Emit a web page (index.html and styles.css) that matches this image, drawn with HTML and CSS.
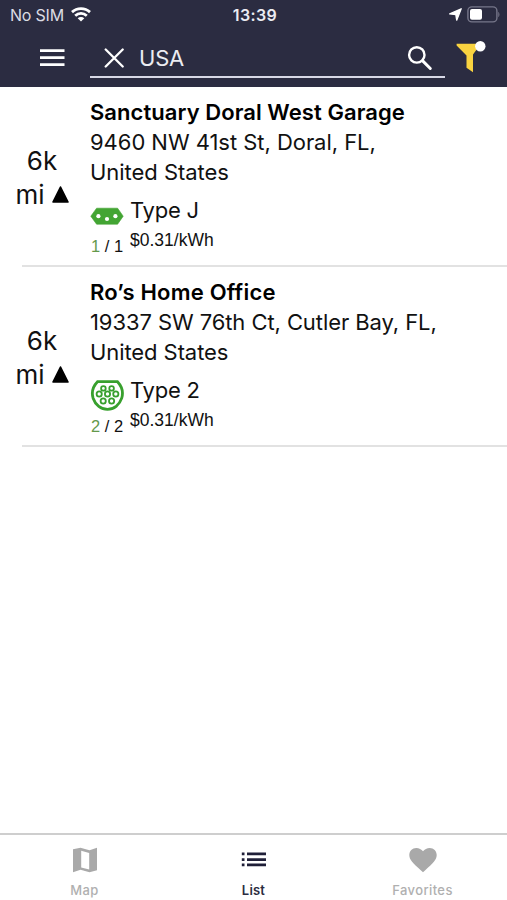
FILE: index.html
```html
<!DOCTYPE html>
<html lang="en">
<head>
<meta charset="utf-8">
<meta name="viewport" content="width=device-width, initial-scale=1">
<title>Charging stations</title>
<link rel="stylesheet" href="styles.css">
</head>
<body>
<header class="header">
  <div class="status">
    <div class="status-left">
      <span class="carrier">No SIM</span>
      <svg class="wifi" width="20" height="15" viewBox="0 0 20 15" fill="none" stroke="#fff" stroke-width="2.8"><path d="M1 5.100C6 .5 14 .5 19 5.100M4.200 8.700c3.300-3 8.300-3 11.600 0"/><path d="M6.700 11.300c1.900-1.700 4.700-1.700 6.600 0L10 14.600z" fill="#fff" stroke="none"/></svg>
    </div>
    <time class="clock">13:39</time>
    <div class="status-right">
      <svg width="13" height="13" viewBox="0 0 13 13" fill="#fff"><path d="M12.200.8 7.700 12.200 6.800 6.600.7 5.900z" stroke="#fff" stroke-width="1.300" stroke-linejoin="round"/></svg>
      <svg width="33" height="17" viewBox="0 0 33 17"><rect x=".9" y=".9" width="29" height="15" rx="4" fill="none" stroke="#77778a" stroke-width="1.400"/><rect x="3" y="3" width="12" height="10.800" rx="2" fill="#fff"/><path d="M31.300 6v5c1.500-.6 1.500-4.400 0-5z" fill="#77778a"/></svg>
    </div>
  </div>
  <div class="toolbar">
    <svg class="menu" width="26" height="18" viewBox="0 0 26 18" fill="#fff"><path d="M1 .3h24.500V3H1zM1 7.300h24.500V10H1zM1 14.200h24.500v2.700H1z"/></svg>
    <div class="search">
      <svg width="20" height="20" viewBox="0 0 20 20" stroke="#fff" stroke-width="2.300" stroke-linecap="round"><path d="m1.700 1.500 17 17m0-17-17 17"/></svg>
      <span class="query">USA</span>
      <svg class="lens" width="26" height="26" viewBox="0 0 26 26" fill="none" stroke="#fff"><circle cx="9.800" cy="9.900" r="7.700" stroke-width="2.400"/><path d="m15.700 15.900 7.600 7.600" stroke-width="3" stroke-linecap="round"/></svg>
    </div>
    <svg class="filter" width="31" height="33" viewBox="0 0 31 33"><path d="M.6 3.700h24.200L17 14.500V32.200l-6.500-4.500V15.500L.6 5.500z" fill="#f9d340"/><circle cx="24.300" cy="6.300" r="5.200" fill="#fff"/></svg>
  </div>
</header>

<main class="stations">
  <article class="station">
    <div class="distance"><span>6k</span><span class="unit">mi <svg width="17" height="17" viewBox="0 0 17 17"><path d="M8.500 1 16 16H1z" stroke="#000" stroke-width="1.600" stroke-linejoin="round"/></svg></span></div>
    <div class="info">
      <h2 class="name">Sanctuary Doral West Garage</h2>
      <p class="address">9460 NW 41st St, Doral, FL,<br>United States</p>
      <div class="plug">
        <div class="availability">
          <svg width="34" height="34" viewBox="0 0 34 34"><path d="M.8 19.200 6.600 11.200h21l5.600 8-5.600 8h-21z" fill="#43a533" stroke="#43a533" stroke-width=".6" stroke-linejoin="round"/><g fill="#fff"><circle cx="8.400" cy="19.200" r="2.100"/><circle cx="17" cy="22" r="2.100"/><circle cx="25.400" cy="19.200" r="2.100"/></g></svg>
          <span class="count"><b>1</b> / 1</span>
        </div>
        <div class="details"><span class="type">Type J</span><span class="price">$0.31/kWh</span></div>
      </div>
    </div>
  </article>
  <article class="station">
    <div class="distance"><span>6k</span><span class="unit">mi <svg width="17" height="17" viewBox="0 0 17 17"><path d="M8.500 1 16 16H1z" stroke="#000" stroke-width="1.600" stroke-linejoin="round"/></svg></span></div>
    <div class="info">
      <h2 class="name name-home">Ro’s Home Office</h2>
      <p class="address address-home">19337 SW 76th Ct, Cutler Bay, FL,<br>United States</p>
      <div class="plug">
        <div class="availability">
          <svg width="34" height="34" viewBox="0 0 34 34" fill="none" stroke="#38a02e"><path d="M7.500 4.700h20c4.700 5 6 10.500 4.200 16.500C29.500 28 23.900 32.300 17.500 32.300S5.400 28 3.100 21.200c-1.800-6-.4-11.500 4.400-16.500z" stroke-width="2.800"/><g stroke-width="1.800"><circle cx="13.400" cy="11.400" r="2.300"/><circle cx="21.600" cy="11.400" r="2.300"/><circle cx="9.200" cy="17" r="2.600"/><circle cx="17.500" cy="17" r="2.600"/><circle cx="25.800" cy="17" r="2.600"/><circle cx="13.200" cy="24" r="2.600"/><circle cx="21.600" cy="24" r="2.600"/></g></svg>
          <span class="count"><b>2</b> / 2</span>
        </div>
        <div class="details"><span class="type">Type 2</span><span class="price">$0.31/kWh</span></div>
      </div>
    </div>
  </article>
</main>

<nav class="tabs">
  <a class="tab"><svg width="26" height="26" viewBox="0 0 26 26" fill="#a9a9a9" fill-rule="evenodd"><path d="M1 2.300 8.500.8l9 2.500L25 .8v22.400l-7.500 2-9-2.500L1 25.200zM9.200 3.700v16.700l8 2.200V5.900z"/></svg><span>Map</span></a>
  <a class="tab active"><svg width="26" height="26" viewBox="0 0 26 26" fill="#1f1f38"><path d="M.8 5.600h2.700v2.700H.8zm5.200 0h19v2.700H6zM.8 11.200h2.700v2.700H.8zm5.200 0h19v2.700H6zM.8 16.600h2.700v2.700H.8zm5.200 0h19v2.700H6z"/></svg><span>List</span></a>
  <a class="tab"><svg width="28" height="26" viewBox="0 0 28 26" fill="#a9a9a9"><path d="M14 25.200 11.500 23C4 16.300.3 12.700.3 8 .3 4 3.300.9 7.300.9 10 .9 12.500 2.200 14 4.300 15.500 2.200 18 .9 20.700.9c4 0 7 3.100 7 7.100 0 4.700-3.700 8.300-11.200 15z"/></svg><span>Favorites</span></a>
</nav>
</body>
</html>
```

FILE: styles.css
```css
* { box-sizing: border-box; }

body {
  margin: 0;
  height: 900px;
  display: flex;
  flex-direction: column;
  background: #fff;
  color: #111;
  font-family: Inter, "Liberation Sans", sans-serif;
}

svg { display: block; flex: none; }

.header {
  height: 87px;
  flex: none;
  background: #2b2c41;
  color: #fff;
}

.status {
  height: 30px;
  display: grid;
  grid-template-columns: 1fr auto 1fr;
  align-items: center;
  padding: 0 7px 0 10px;
}

.status-left, .status-right { display: flex; align-items: center; }
.status-left { gap: 7px; }
.status-right { justify-content: flex-end; gap: 5px; margin-top: -2px; }
.wifi { margin-top: -1px; }
.carrier { font-size: 16px; color: #dcdce4; letter-spacing: -.2px; }
.clock { font-size: 16px; font-weight: 600; color: #ececf2; letter-spacing: .4px; }

.toolbar {
  display: flex;
  align-items: flex-start;
  padding-left: 39px;
}

.menu { margin-top: 19px; }

.search {
  width: 355px;
  height: 48px;
  margin-left: 25px;
  padding: 9px 11px 0 14px;
  display: flex;
  align-items: center;
  border-bottom: 2px solid #d8d8e6;
}

.query { margin-left: 15px; font-size: 22px; color: #ececf2; letter-spacing: -.2px; }
.lens { margin-left: auto; margin-right: 1px; }
.filter { margin: 10px 0 0 11px; }

.stations { flex: 1; }

.station {
  height: 180px;
  display: flex;
  background: linear-gradient(#e2e2e2, #e2e2e2) 22px 100% / 100% 2px no-repeat;
}

.distance {
  width: 84px;
  padding-top: 57px;
  display: flex;
  flex-direction: column;
  align-items: center;
  font-size: 26px;
  line-height: 34px;
}

.unit { display: flex; gap: 7px; align-items: center; }
.unit svg { margin-top: -2px; }

.info { padding: 10px 0 0 6px; flex: 1; }

.name {
  margin: 0;
  font-size: 22px;
  line-height: 30px;
  font-weight: 600;
  letter-spacing: .06px;
  color: #000;
}

.name-home { letter-spacing: .2px; }

.address { margin: 0; font-size: 22px; line-height: 30px; letter-spacing: -.04px; }
.address-home { letter-spacing: -.08px; }

.plug { display: flex; gap: 6px; padding-top: 4px; }
.availability { width: 34px; padding-top: 6px; }

.count {
  display: block;
  padding: 1px 0 0 1px;
  font: 16.500px/28px "Liberation Sans", sans-serif;
  white-space: nowrap;
}

.count b { font-weight: 400; color: #64994c; }
.details { display: flex; flex-direction: column; padding-top: 2px; }
.type { font-size: 22px; line-height: 34px; letter-spacing: -.25px; }
.price { margin-top: 1px; font: 17.500px/24px "Liberation Sans", sans-serif; }

.tabs {
  height: 67px;
  flex: none;
  display: grid;
  grid-template-columns: repeat(3, 1fr);
  border-top: 2px solid #cecece;
}

.tab {
  display: flex;
  flex-direction: column;
  align-items: center;
  padding-top: 12px;
  gap: 9px;
  color: #b0b0b0;
  font-size: 13px;
  line-height: 16px;
  font-weight: 500;
  letter-spacing: .4px;
}

.active { color: #2b2c41; font-weight: 600; letter-spacing: .2px; }
```
